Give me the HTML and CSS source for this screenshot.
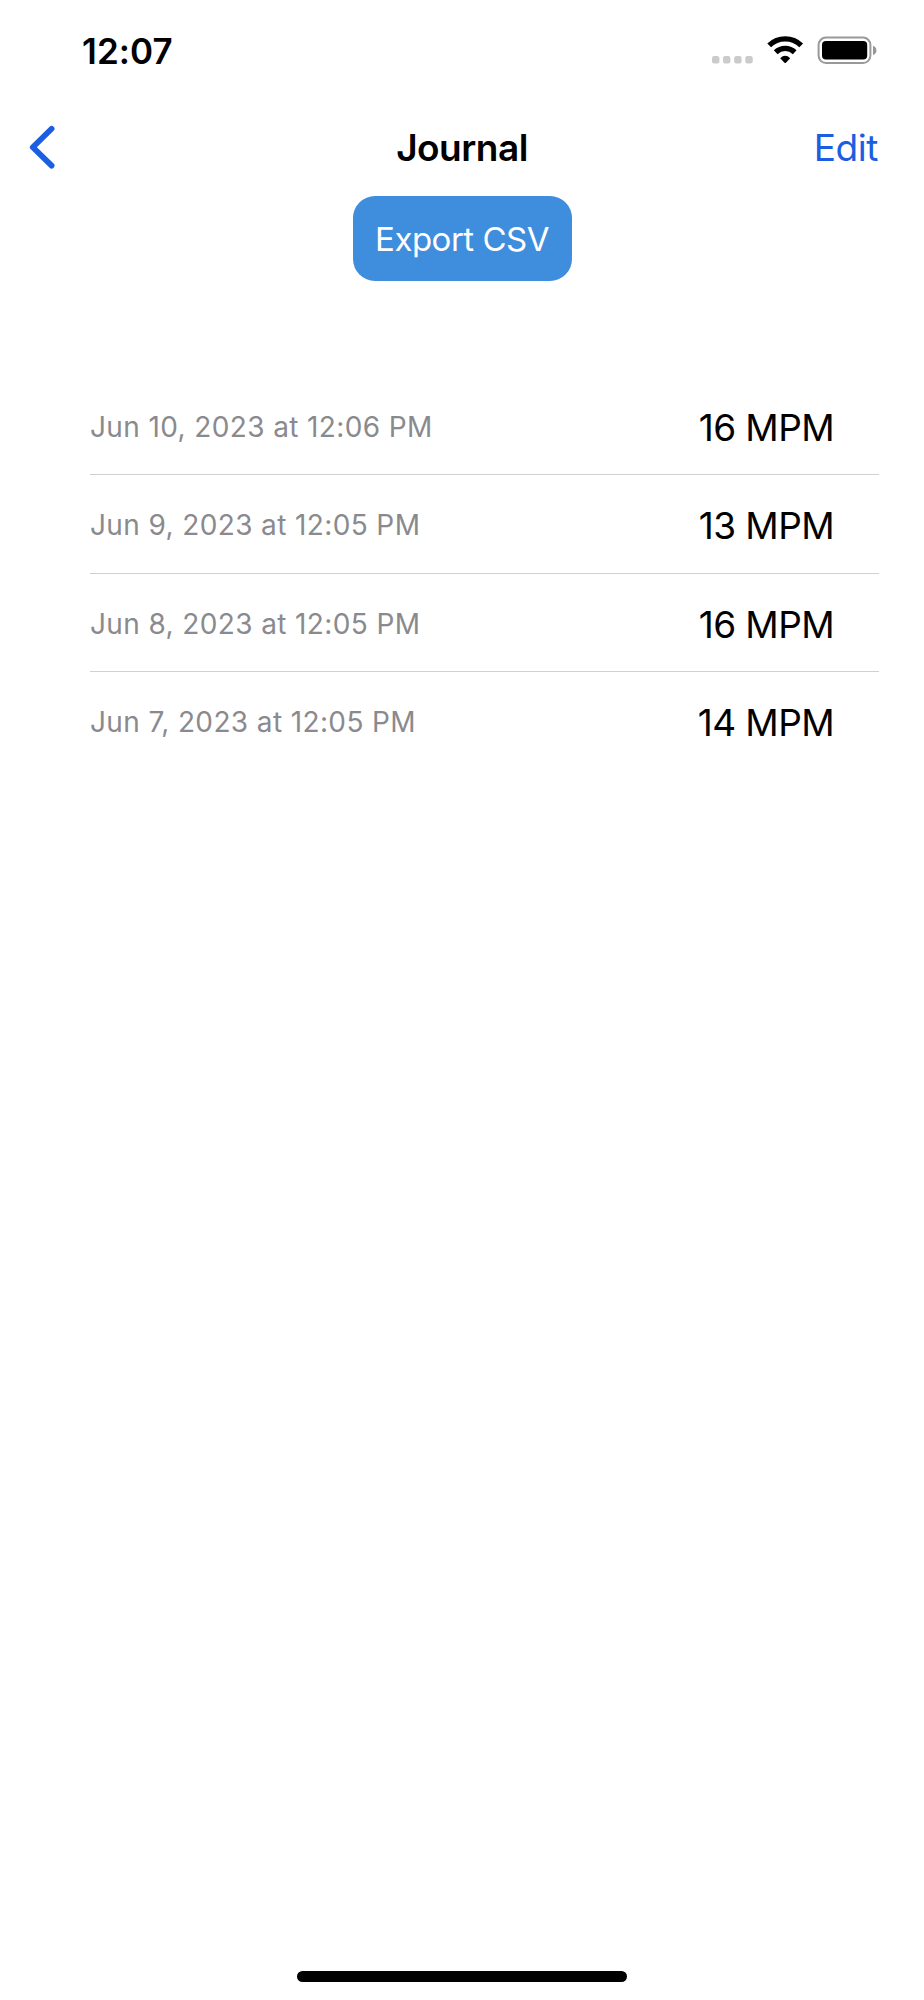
FILE: index.html
```html
<!DOCTYPE html>
<html lang="en">
<head>
<meta charset="utf-8">
<title>Journal</title>
<link rel="stylesheet" href="styles.css">
</head>
<body>
<div class="screen">
  <header class="status-bar">
    <span class="clock">12:07</span>
    <svg class="status-icons" width="168" height="30" viewBox="710 35 168 30" aria-hidden="true">
      <g fill="#cbcbcb">
        <rect x="712" y="56" width="7.4" height="7.4" rx="2.2"/>
        <rect x="723" y="56" width="7.4" height="7.4" rx="2.2"/>
        <rect x="734.2" y="56" width="7.4" height="7.4" rx="2.2"/>
        <rect x="745.3" y="56" width="7.4" height="7.4" rx="2.2"/>
      </g>
      <g fill="none" stroke="#000">
        <path d="M769.2 45.4A23 23 0 0 1 801.2 45.4" stroke-width="5.4"/>
        <path d="M775.7 52.2A13.8 13.8 0 0 1 794.7 52.2" stroke-width="5.4"/>
      </g>
      <path d="M780.2 58.2Q785.2 53.3 790.2 58.2L785.9 62.7Q785.2 63.4 784.5 62.7Z"/>
      <rect x="818.6" y="37.6" width="51.8" height="25.4" rx="7.4" fill="none" stroke="#999" stroke-width="2"/>
      <rect x="822" y="41" width="45.2" height="18.6" rx="4"/>
      <path d="M873 45.8Q876.4 47.2 876.4 50.4Q876.4 53.6 873 55Z" fill="#969696"/>
    </svg>
  </header>
  <nav class="nav-bar">
    <svg class="back" width="28" height="46" viewBox="28 124 28 46" role="img" aria-label="Back">
      <path d="M51.6 128.8L32.8 147.2L51.6 165.6" fill="none" stroke="#1b5ee2" stroke-width="5.8" stroke-linecap="round" stroke-linejoin="round"/>
    </svg>
    <h1 class="title">Journal</h1>
    <a class="edit">Edit</a>
  </nav>
  <main class="content">
    <button class="export">Export CSV</button>
    <ul class="entries">
      <li class="entry"><span class="date">Jun 10, 2023 at 12:06 PM</span><span class="value">16 MPM</span></li>
      <li class="entry"><span class="date">Jun 9, 2023 at 12:05 PM</span><span class="value">13 MPM</span></li>
      <li class="entry"><span class="date">Jun 8, 2023 at 12:05 PM</span><span class="value">16 MPM</span></li>
      <li class="entry"><span class="date">Jun 7, 2023 at 12:05 PM</span><span class="value">14 MPM</span></li>
    </ul>
  </main>
  <div class="home-indicator"></div>
</div>
</body>
</html>
```
FILE: styles.css
```css
* { box-sizing: border-box; }
body {
  margin: 0;
  background: #fff;
  color: #000;
  font-family: Inter, "Liberation Sans", sans-serif;
}
.screen {
  display: flex;
  flex-direction: column;
  width: 924px;
  height: 2000px;
  padding-bottom: 18px;
}
.status-bar {
  display: flex;
  justify-content: space-between;
  align-items: center;
  height: 100px;
  padding: 0 46px 0 82px;
}
.clock {
  padding-top: 1px;
  font-size: 35px;
  font-weight: 600;
  line-height: 40px;
  letter-spacing: 0.1px;
}
.nav-bar {
  display: grid;
  grid-template-columns: 1fr auto 1fr;
  align-items: center;
  height: 96.4px;
  padding: 0 46px 0 28px;
}
.back { margin-top: -2px; }
.title {
  margin: 0 0 0 18px;
  font-size: 37px;
  font-weight: 600;
  line-height: 44px;
  letter-spacing: -0.5px;
}
.edit {
  justify-self: end;
  color: #1b5ee2;
  font-size: 37px;
  line-height: 44px;
  letter-spacing: -0.4px;
}
.content {
  display: flex;
  flex: 1;
  flex-direction: column;
  align-items: center;
}
.export {
  width: 219px;
  height: 85px;
  padding: 0;
  border: 0;
  border-radius: 22px;
  background: #3f8ddd;
  color: #fff;
  font: 400 33px/40px Inter, "Liberation Sans", sans-serif;
  letter-spacing: -0.5px;
  white-space: nowrap;
}
.entries {
  align-self: stretch;
  margin: 96px 45px 0 89.5px;
  padding: 0;
  list-style: none;
}
.entry {
  display: flex;
  justify-content: space-between;
  align-items: flex-start;
  height: 98.1px;
  padding: 29px 45px 0 0.5px;
  border-bottom: 1px solid #d0d0d2;
}
.entry:last-child { border-bottom: 0; }
.date {
  color: #8a8a8e;
  font-size: 28px;
  line-height: 42px;
  letter-spacing: 0.38px;
}
.value {
  font-size: 37px;
  line-height: 44px;
  letter-spacing: -0.6px;
}
.home-indicator {
  align-self: center;
  width: 330px;
  height: 11px;
  border-radius: 5.5px;
  background: #000;
}
```
